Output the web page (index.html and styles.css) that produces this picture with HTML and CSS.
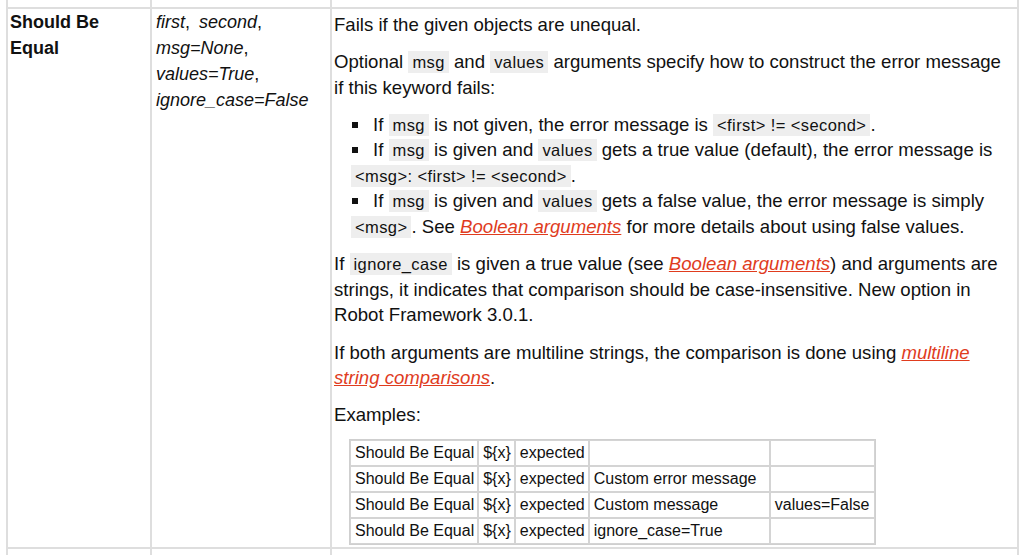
FILE: index.html
```html
<!DOCTYPE html>
<html>
<head>
<meta charset="utf-8">
<link rel="stylesheet" href="styles.css">
</head>
<body>
<div class="page">
<table class="keywords">
  <colgroup><col class="c-name"><col class="c-args"><col class="c-doc"></colgroup>
  <tr class="edge-row top"><td></td><td></td><td></td></tr>
  <tr class="kw-row">
    <td class="kw-name">Should Be Equal</td>
    <td class="kw-args"><span class="arg">first</span>, <span class="arg">second</span>, <span class="arg">msg=None</span>, <span class="arg">values=True</span>, <span class="arg">ignore_case=False</span></td>
    <td class="kw-doc">
      <p>Fails if the given objects are unequal.</p>
      <p>Optional <code>msg</code> and <code>values</code> arguments specify how to construct the error message if this keyword fails:</p>
      <ul>
        <li>If <code>msg</code> is not given, the error message is <code>&lt;first&gt; != &lt;second&gt;</code>.</li>
        <li>If <code>msg</code> is given and <code>values</code> gets a true value (default), the error message is <code>&lt;msg&gt;: &lt;first&gt; != &lt;second&gt;</code>.</li>
        <li>If <code>msg</code> is given and <code>values</code> gets a false value, the error message is simply <code>&lt;msg&gt;</code>. See <a href="#" class="name">Boolean arguments</a> for more details about using false values.</li>
      </ul>
      <p>If <code>ignore_case</code> is given a true value (see <a href="#" class="name">Boolean arguments</a>) and arguments are strings, it indicates that comparison should be case-insensitive. New option in Robot Framework 3.0.1.</p>
      <p>If both arguments are multiline strings, the comparison is done using <a href="#" class="name">multiline string comparisons</a>.</p>
      <p>Examples:</p>
      <table class="example">
        <tr><td>Should Be Equal</td><td>${x}</td><td>expected</td><td></td><td></td></tr>
        <tr><td>Should Be Equal</td><td>${x}</td><td>expected</td><td>Custom error message</td><td></td></tr>
        <tr><td>Should Be Equal</td><td>${x}</td><td>expected</td><td>Custom message</td><td>values=False</td></tr>
        <tr><td>Should Be Equal</td><td>${x}</td><td>expected</td><td>ignore_case=True</td><td></td></tr>
      </table>
    </td>
  </tr>
  <tr class="edge-row bottom"><td></td><td></td><td></td></tr>
</table>
</div>
</body>
</html>
```

FILE: styles.css
```css
html, body {
  margin: 0;
  padding: 0;
  background: #fff;
  color: #111;
  font-family: "Liberation Sans", Arial, sans-serif;
  overflow: hidden;
}

.page {
  padding: 0 5px 0 6px;
}

.keywords {
  width: 100%;
  border-collapse: collapse;
  table-layout: fixed;
}

.c-name { width: 144px; }
.c-args { width: 180px; }

.keywords > tbody > tr > td {
  border: 2px solid #dedede;
  vertical-align: top;
}

.edge-row.top td {
  border-top: 0;
  height: 7px;
  padding: 0;
}

.edge-row.bottom td {
  border-bottom: 0;
  height: 30px;
  padding: 0;
}

.kw-name {
  font-weight: bold;
  font-size: 18px;
  line-height: 26px;
  padding: 0 3px 0 2px;
}

.kw-args {
  font-size: 18px;
  line-height: 26px;
  padding: 0 4px;
  word-spacing: 4px;
}

.arg {
  font-style: italic;
}

.kw-doc {
  font-size: 18.6px;
  line-height: 25.5px;
  padding: 3px 2px 2px 2px;
}

.kw-doc p {
  margin: 0 0 11.7px 0;
}

.kw-doc ul {
  margin: 0 0 12px 0;
  padding-left: 17px;
  list-style: none;
}

.kw-doc li::before {
  content: "";
  display: inline-block;
  width: 6px;
  height: 6px;
  background: #111;
  margin: 0 15px 0 1px;
  vertical-align: 3px;
}

code {
  font-family: "Liberation Sans", Arial, sans-serif;
  font-size: 16.5px;
  line-height: 1;
  letter-spacing: 0.4px;
  background: #eeeeee;
  padding: 2px 4px;
}

a.name {
  color: #e03c1e;
  font-style: italic;
  text-decoration: underline;
}

.example {
  margin-left: 15px;
  border: 1px solid #cfcfcf;
  border-collapse: separate;
  border-spacing: 0;
  font-size: 16px;
  line-height: 22px;
}

.example td {
  border: 1px solid #d4d4d4;
  padding: 1px 3px 1px 4px;
  white-space: nowrap;
}

.example td:nth-child(4) { min-width: 172px; }
.example td:nth-child(5) { min-width: 96px; }
```
